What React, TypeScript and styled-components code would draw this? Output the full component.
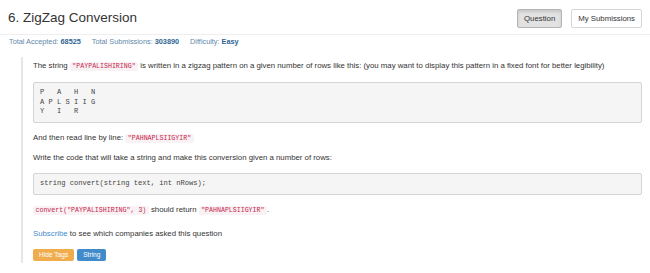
import React from 'react'
import styled, { createGlobalStyle } from 'styled-components'

const GlobalStyle = createGlobalStyle`
  body {
    margin: 0;
    background: #fff;
    color: #333;
    font-family: "Liberation Sans", Arial, sans-serif;
  }
`

interface Stat {
  label: string
  value: string
}

const stats: Stat[] = [
  { label: 'Total Accepted:', value: '68525' },
  { label: 'Total Submissions:', value: '303890' },
  { label: 'Difficulty:', value: 'Easy' },
]

export default function App() {
  return (
    <Page>
      <GlobalStyle />
      <Header>
        <Title>6. ZigZag Conversion</Title>
        <Tabs>
          <TabButton active>Question</TabButton>
          <TabButton>My Submissions</TabButton>
        </Tabs>
      </Header>
      <Stats>
        {stats.map(stat => (
          <StatItem key={stat.label}>
            {stat.label} <StatValue>{stat.value}</StatValue>
          </StatItem>
        ))}
      </Stats>
      <Question>
        <Text>
          The string <Code>"PAYPALISHIRING"</Code> is written in a zigzag pattern on a given number of
          rows like this: (you may want to display this pattern in a fixed font for better legibility)
        </Text>
        <Pre>{`P   A   H   N
A P L S I I G
Y   I   R`}</Pre>
        <Text>
          And then read line by line: <Code>"PAHNAPLSIIGYIR"</Code>
        </Text>
        <Text>Write the code that will take a string and make this conversion given a number of rows:</Text>
        <Pre>string convert(string text, int nRows);</Pre>
        <Text>
          <Code>convert("PAYPALISHIRING", 3)</Code> should return <Code>"PAHNAPLSIIGYIR"</Code>.
        </Text>
        <Subscribe>
          <Link href="#">Subscribe</Link> to see which companies asked this question
        </Subscribe>
        <Tags>
          <Tag kind="warning">Hide Tags</Tag>
          <Tag kind="primary">String</Tag>
        </Tags>
      </Question>
    </Page>
  )
}

const Page = styled.div`
  width: 650px;
`

const Header = styled.div`
  display: flex;
  justify-content: space-between;
  align-items: flex-start;
  padding: 9px 8px 6px;
  border-bottom: 1px solid #eee;
`

const Title = styled.h3`
  margin: 1px 0 0;
  font-size: 13.5px;
  line-height: 15px;
  font-weight: normal;
  color: #333;
`

const Tabs = styled.div`
  display: flex;
  gap: 9px;
`

const TabButton = styled.button<{ active?: boolean }>`
  height: 19px;
  padding: 0 6px;
  font-family: "Liberation Sans", Arial, sans-serif;
  font-size: 7.8px;
  color: #333;
  border-radius: 2px;
  border: 1px solid ${props => (props.active ? '#b5b5b5' : '#d6d6d6')};
  background: ${props => (props.active ? '#e2e2e2' : '#fff')};
  box-shadow: ${props => (props.active ? 'inset 0 2px 3px rgba(0,0,0,0.12)' : 'none')};
`

const Stats = styled.div`
  display: flex;
  gap: 11px;
  margin-top: 2px;
  padding-left: 9px;
  font-size: 7.3px;
  line-height: 10px;
`

const StatItem = styled.span`
  color: #5f88ab;
`

const StatValue = styled.b`
  color: #2e6593;
`

const Question = styled.div`
  margin: 10px 8px 0 21px;
  padding: 2.5px 0 2px 10px;
  border-left: 2px solid #e6e6e6;
  font-size: 7.8px;
`

const Text = styled.p`
  margin: 0 0 8px;
  line-height: 11px;
`

const Subscribe = styled(Text)`
  margin-top: 12.5px;
  margin-bottom: 10px;
`

const Link = styled.a`
  color: #428bca;
  text-decoration: none;
`

const Code = styled.code`
  font-family: "Liberation Mono", monospace;
  font-size: 6.6px;
  color: #c7254e;
  background: #f9f2f4;
  padding: 1px 2.5px;
  border-radius: 2px;
`

const Pre = styled.pre`
  margin: 10px 0 8.5px;
  padding: 5.5px 6px;
  font-family: "Liberation Mono", monospace;
  font-size: 7.1px;
  line-height: 9.5px;
  color: #444;
  background: #f5f5f5;
  border: 1px solid #d4d4d4;
  border-radius: 2px;
`

const Tags = styled.div`
  display: flex;
  gap: 3px;
`

const Tag = styled.span<{ kind: 'warning' | 'primary' }>`
  height: 12px;
  padding: 0 6px;
  font-size: 6.6px;
  line-height: 12px;
  color: #fff;
  border-radius: 2px;
  background: ${props => (props.kind === 'warning' ? '#f0ad4e' : '#428bca')};
`
